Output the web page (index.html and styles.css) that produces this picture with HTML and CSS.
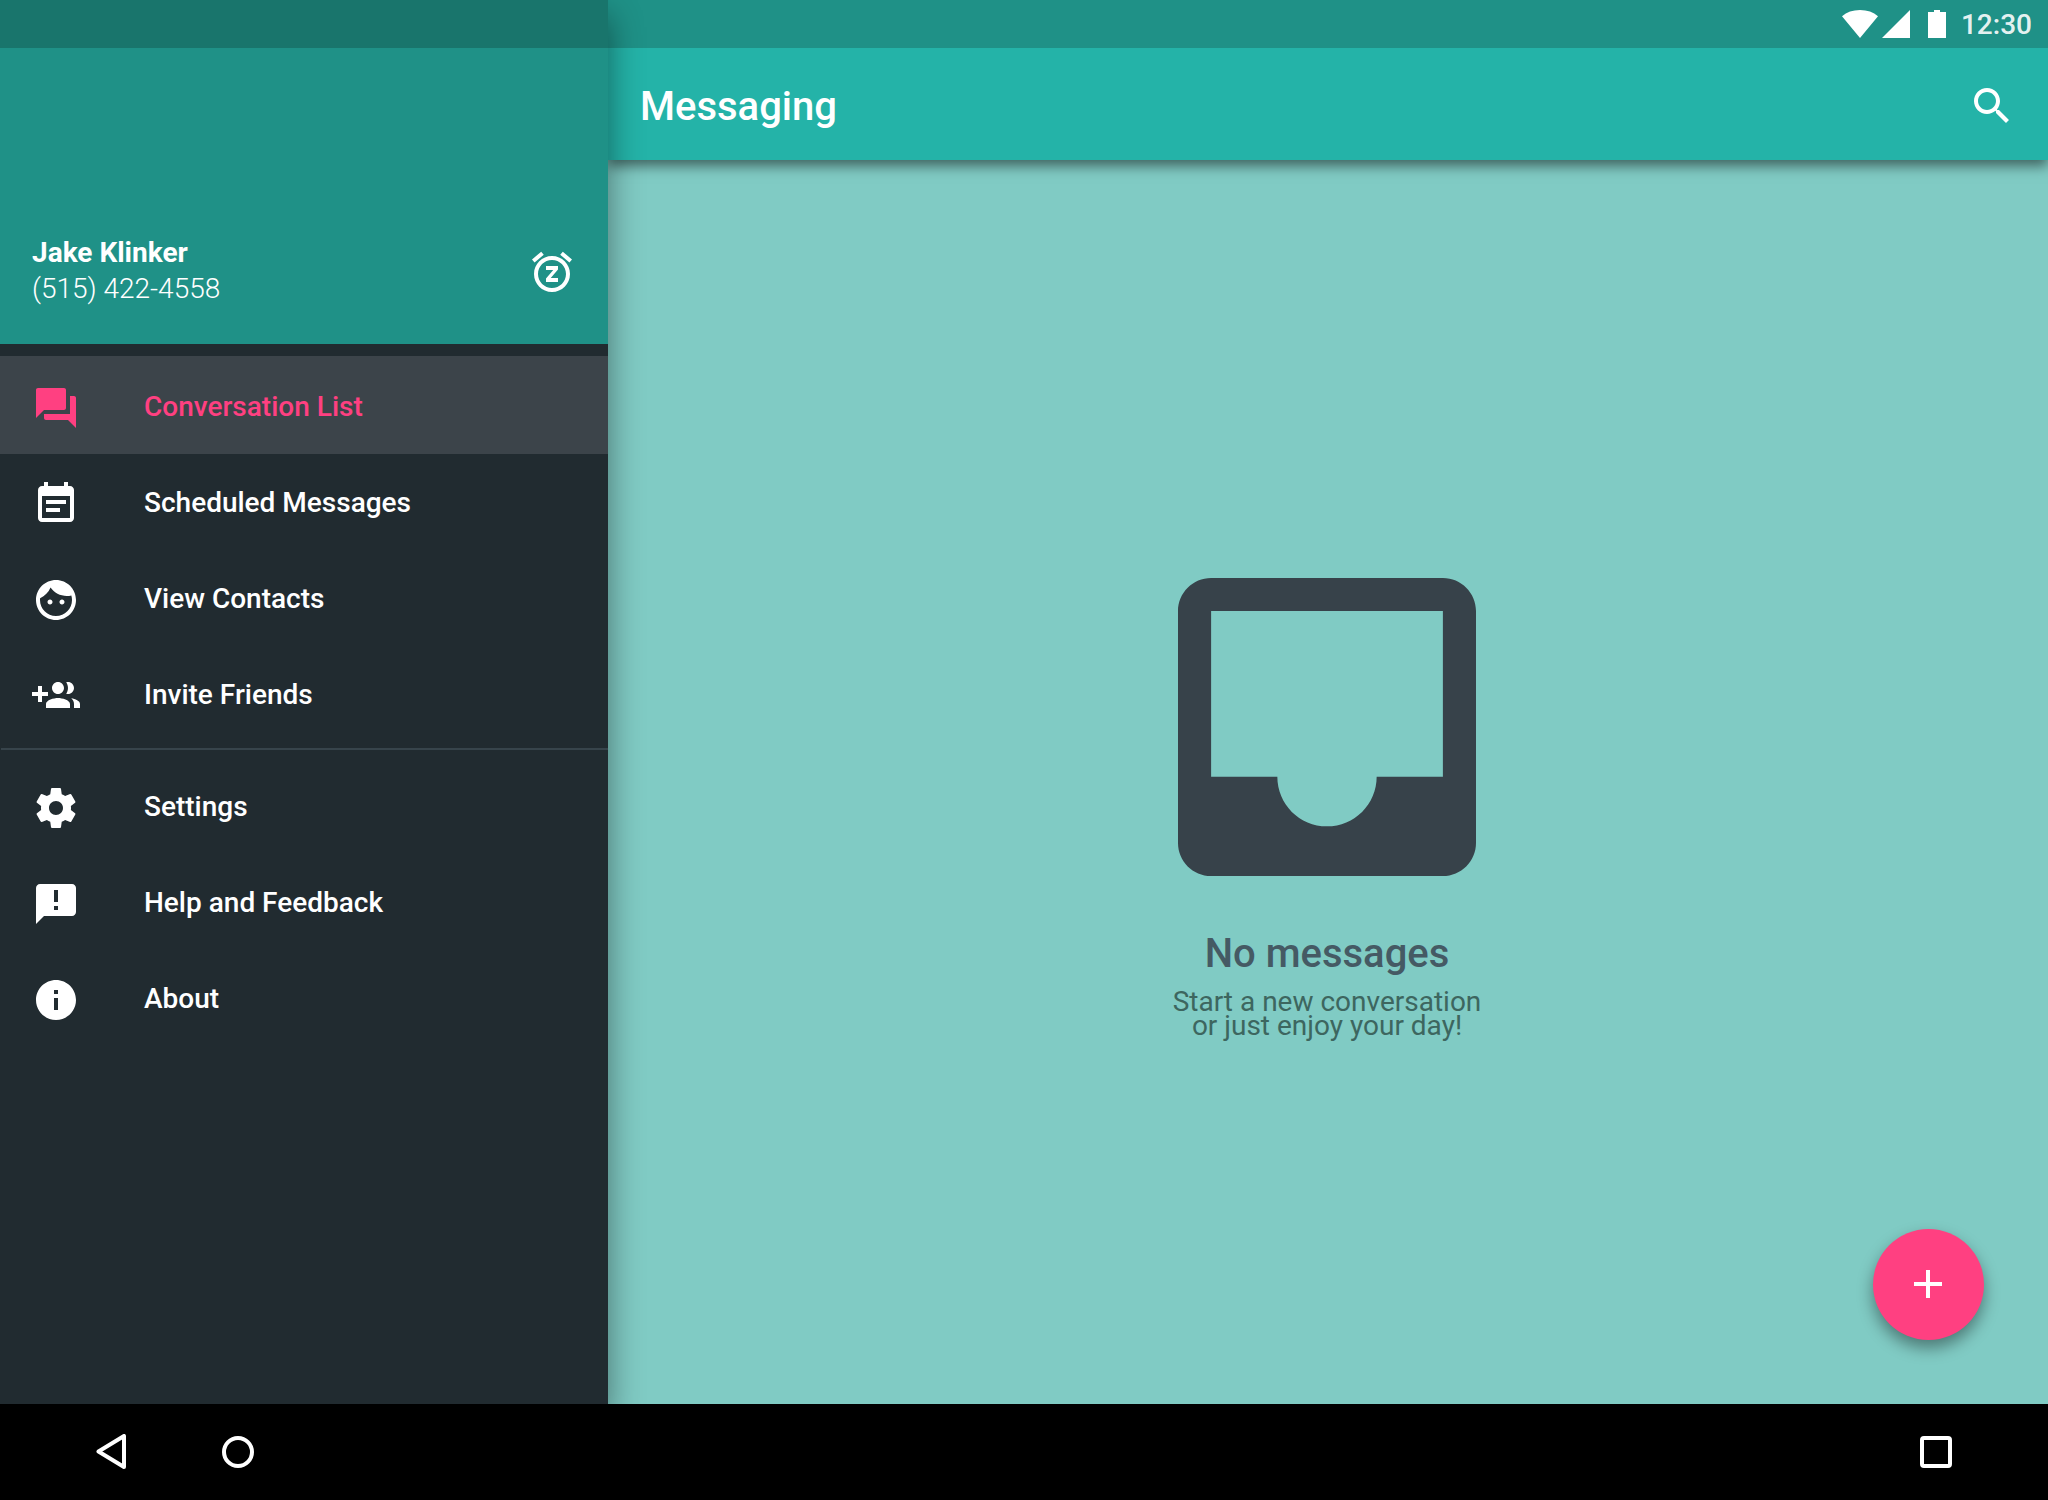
FILE: index.html
```html
<!DOCTYPE html>
<html lang="en">
<head>
<meta charset="utf-8">
<title>Messaging</title>
<link rel="stylesheet" href="styles.css">
</head>
<body>
<div class="screen">
  <div class="app">
    <aside class="drawer">
      <header class="profile">
        <div class="profile-text">
          <div class="profile-name">Jake Klinker</div>
          <div class="profile-phone">(515) 422-4558</div>
        </div>
        <svg class="icon snooze" viewBox="0 0 24 24"><path d="M7.88 3.39L6.6 1.86 2 5.71l1.29 1.53 4.59-3.85zM22 5.72l-4.6-3.86-1.29 1.53 4.6 3.86L22 5.72zM12 4c-4.97 0-9 4.03-9 9s4.02 9 9 9c4.97 0 9-4.03 9-9s-4.03-9-9-9zm0 16c-3.87 0-7-3.13-7-7s3.13-7 7-7 7 3.13 7 7-3.13 7-7 7zm-3-9h3.63L9 15.2V17h6v-2h-3.63L15 10.8V9H9v2z"/></svg>
      </header>
      <nav class="menu">
        <a class="item active"><svg class="icon" viewBox="0 0 24 24"><path d="M21 6h-2v9H6v2c0 .55.45 1 1 1h11l4 4V7c0-.55-.45-1-1-1zm-4 6V3c0-.55-.45-1-1-1H3c-.55 0-1 .45-1 1v14l4-4h10c.55 0 1-.45 1-1z"/></svg><span>Conversation List</span></a>
        <a class="item"><svg class="icon" viewBox="0 0 24 24"><path d="M17 10H7v2h10v-2zm2-7h-1V1h-2v2H8V1H6v2H5c-1.11 0-1.99.9-1.99 2L3 19c0 1.1.89 2 2 2h14c1.1 0 2-.9 2-2V5c0-1.1-.9-2-2-2zm0 16H5V8h14v11zm-5-5H7v2h7v-2z"/></svg><span>Scheduled Messages</span></a>
        <a class="item"><svg class="icon" viewBox="0 0 24 24"><path d="M9 11.75c-.69 0-1.25.56-1.25 1.25s.56 1.25 1.25 1.25 1.25-.56 1.25-1.25-.56-1.25-1.25-1.25zm6 0c-.69 0-1.25.56-1.25 1.25s.56 1.25 1.25 1.25 1.25-.56 1.25-1.25-.56-1.25-1.25-1.25zM12 2C6.48 2 2 6.48 2 12s4.48 10 10 10 10-4.48 10-10S17.52 2 12 2zm0 18c-4.41 0-8-3.59-8-8 0-.29.02-.58.05-.86 2.36-1.05 4.23-2.98 5.21-5.37C11.07 8.33 14.05 10 17.42 10c.78 0 1.53-.09 2.25-.26.21.71.33 1.47.33 2.26 0 4.41-3.59 8-8 8z"/></svg><span>View Contacts</span></a>
        <a class="item"><svg class="icon" viewBox="0 0 24 24"><path d="M8 10H5V7H3v3H0v2h3v3h2v-3h3v-2zm10 1c1.66 0 2.99-1.34 2.99-3S19.66 5 18 5c-.32 0-.63.05-.91.14.57.81.9 1.79.9 2.86s-.34 2.04-.9 2.86c.28.09.59.14.91.14zm-5 0c1.66 0 2.99-1.34 2.99-3S14.66 5 13 5c-1.66 0-3 1.34-3 3s1.34 3 3 3zm6.62 2.16c.83.73 1.38 1.66 1.38 2.84v2h3v-2c0-1.54-2.37-2.49-4.38-2.84zM13 13c-2 0-6 1-6 3v2h12v-2c0-2-4-3-6-3z"/></svg><span>Invite Friends</span></a>
        <hr class="divider">
        <a class="item"><svg class="icon" viewBox="0 0 24 24"><path d="M19.43 12.98c.04-.32.07-.64.07-.98s-.03-.66-.07-.98l2.11-1.65c.19-.15.24-.42.12-.64l-2-3.46c-.12-.22-.39-.3-.61-.22l-2.49 1c-.52-.4-1.08-.73-1.69-.98l-.38-2.65C14.46 2.18 14.25 2 14 2h-4c-.25 0-.46.18-.49.42l-.38 2.65c-.61.25-1.17.59-1.69.98l-2.49-1c-.23-.09-.49 0-.61.22l-2 3.46c-.13.22-.07.49.12.64l2.11 1.65c-.04.32-.07.65-.07.98s.03.66.07.98l-2.11 1.65c-.19.15-.24.42-.12.64l2 3.46c.12.22.39.3.61.22l2.49-1c.52.4 1.08.73 1.69.98l.38 2.65c.03.24.24.42.49.42h4c.25 0 .46-.18.49-.42l.38-2.65c.61-.25 1.17-.59 1.69-.98l2.49 1c.23.09.49 0 .61-.22l2-3.46c.12-.22.07-.49-.12-.64l-2.11-1.65zM12 15.5c-1.93 0-3.5-1.57-3.5-3.5s1.57-3.5 3.5-3.5 3.5 1.57 3.5 3.5-1.57 3.5-3.5 3.5z"/></svg><span>Settings</span></a>
        <a class="item"><svg class="icon" viewBox="0 0 24 24"><path d="M20 2H4c-1.1 0-1.99.9-1.99 2L2 22l4-4h14c1.1 0 2-.9 2-2V4c0-1.1-.9-2-2-2zm-7 9h-2V5h2v6zm0 4h-2v-2h2v2z"/></svg><span>Help and Feedback</span></a>
        <a class="item"><svg class="icon" viewBox="0 0 24 24"><path d="M12 2C6.48 2 2 6.48 2 12s4.48 10 10 10 10-4.48 10-10S17.52 2 12 2zm1 15h-2v-6h2v6zm0-8h-2V7h2v2z"/></svg><span>About</span></a>
      </nav>
    </aside>
    <section class="main">
      <div class="status-bar">
        <svg class="status-icons" viewBox="0 0 104 28"><path d="M0 6.200Q7 0 18 0T36 6.200L18 28zM40 28L68 0V28zM86 2h6V0h6v2h6v26H86z"/></svg>
        <span class="clock">12:30</span>
      </div>
      <header class="app-bar">
        <h1 class="title">Messaging</h1>
        <svg class="icon search" viewBox="0 0 24 24"><path d="M15.500 14h-.79l-.28-.27C15.410 12.590 16 11.110 16 9.500 16 5.910 13.090 3 9.500 3S3 5.910 3 9.500 5.910 16 9.500 16c1.610 0 3.090-.59 4.230-1.570l.27.280v.79l5 4.990L20.490 19l-4.990-5zm-6 0C7.010 14 5 11.990 5 9.500S7.010 5 9.500 5 14 7.010 14 9.500 11.990 14 9.500 14z"/></svg>
      </header>
      <div class="empty">
        <svg class="inbox" viewBox="3 3 18 18"><path d="M19 3H5c-1.100 0-2 .9-2 2v14c0 1.100.9 2 2 2h14c1.100 0 2-.9 2-2V5c0-1.100-.9-2-2-2zm0 12h-4c0 1.660-1.340 3-3 3s-3-1.340-3-3H5V5h14v10z"/></svg>
        <h2 class="empty-title">No messages</h2>
        <p class="empty-text">Start a new conversation<br>or just enjoy your day!</p>
      </div>
      <button class="fab" aria-label="New conversation"><svg class="icon" viewBox="0 0 24 24"><path d="M19 13h-6v6h-2v-6H5v-2h6V5h2v6h6v2z"/></svg></button>
    </section>
  </div>
  <footer class="nav-bar">
    <svg class="nav-icon back" viewBox="0 0 36 36"><path d="M4.500 17.500L30 2V33z"/></svg>
    <svg class="nav-icon home" viewBox="0 0 36 36"><circle cx="18" cy="18" r="14"/></svg>
    <svg class="nav-icon recents" viewBox="0 0 36 36"><rect x="4" y="4" width="28" height="28" rx="2"/></svg>
  </footer>
</div>
</body>
</html>
```
FILE: styles.css
```css
* { box-sizing: border-box; }
body { margin: 0; font-family: Roboto, "Liberation Sans", sans-serif; }
h1, h2, p { margin: 0; }
.screen { width: 2048px; height: 1500px; display: flex; flex-direction: column; overflow: hidden; background: #000; }
.app { flex: 1; display: flex; min-height: 0; overflow: hidden; }
.icon { width: 48px; height: 48px; flex: none; fill: #fff; }

.drawer { position: relative; z-index: 2; width: 608px; flex: none; background: #212b30; color: #fff; box-shadow: 0 16px 32px rgba(0, 0, 0, .45); }
.profile { height: 344px; display: flex; justify-content: space-between; align-items: flex-start; padding: 235px 32px 0; background: linear-gradient(#19756c 48px, #1f9187 48px); }
.profile-text { font-size: 28px; line-height: 36px; }
.profile-name { font-weight: 700; }
.profile-phone { font-weight: 300; }
.snooze { margin-top: 13px; }

.menu { padding-top: 12px; }
.item { height: 96px; display: flex; align-items: center; gap: 64px; padding: 0 32px; font-size: 28px; font-weight: 500; line-height: 32px; }
.item span { margin-top: -3px; }
.item.active { height: 98px; margin-bottom: 2px; padding-top: 6px; background: #3c444a; color: #ff4081; }
.item.active .icon { fill: #ff4081; }
.divider { height: 2px; margin: 4px 0 10px 1px; border: 0; background: #37444b; }

.main { position: relative; flex: 1; display: flex; flex-direction: column; background: #80cbc4; }
.status-bar { position: relative; z-index: 1; height: 48px; display: flex; align-items: center; justify-content: flex-end; gap: 15px; padding-right: 16px; background: #1f9187; }
.status-icons { width: 104px; height: 28px; fill: #fff; }
.clock { padding-top: 2px; color: rgba(255, 255, 255, .9); font-size: 28px; font-weight: 500; line-height: 32px; }
.app-bar { height: 112px; display: flex; align-items: center; justify-content: space-between; padding: 4px 32px 0; background: #24b3a8; box-shadow: 0 6px 12px rgba(0, 0, 0, .5); }
.title { padding-top: 2px; color: #fff; font-size: 40px; font-weight: 500; line-height: 48px; }

.empty { display: flex; flex-direction: column; align-items: center; padding: 418px 2px 0 0; margin-right: 0; text-align: center; }
.inbox { width: 298px; height: 298px; fill: #37424a; }
.empty-title { margin-top: 54px; color: #455a64; font-size: 40px; font-weight: 500; line-height: 48px; }
.empty-text { margin-top: 12px; color: #3d665f; font-size: 28px; line-height: 24px; }

.fab { position: absolute; right: 64.5px; bottom: 64.5px; width: 111px; height: 111px; display: flex; align-items: center; justify-content: center; padding: 0; border: 0; border-radius: 50%; background: #ff4081; box-shadow: 0 8px 16px rgba(0, 0, 0, .4); }

.nav-bar { height: 96px; display: flex; align-items: center; padding: 0 94px; background: #000; }
.nav-icon { width: 36px; height: 36px; fill: none; stroke: #fff; stroke-width: 4; stroke-linejoin: round; }
.home { margin-left: 90px; }
.recents { margin-left: auto; }
```
